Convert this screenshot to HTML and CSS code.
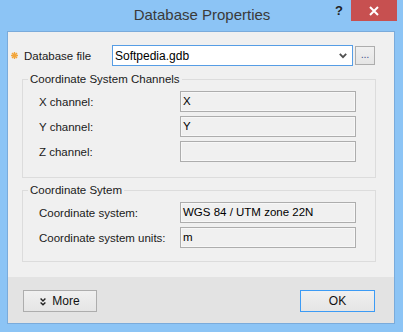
FILE: index.html
```html
<!DOCTYPE html>
<html>
<head>
<meta charset="utf-8">
<link rel="stylesheet" href="styles.css">
</head>
<body>
<div class="window">
  <div class="titlebar">
    <div class="tb-spacer"></div>
    <div class="title">Database Properties</div>
    <div class="caption-btns">
      <span class="help">?</span>
      <span class="close">
        <svg width="10" height="10" viewBox="0 0 10 10"><path d="M1 1 L9 9 M9 1 L1 9" stroke="#fff" stroke-width="2"/></svg>
      </span>
    </div>
  </div>
  <div class="client">
    <div class="content">
      <div class="file-row">
        <svg class="req" width="7" height="7" viewBox="0 0 7 7"><path d="M3.5 0 V7 M0 3.5 H7 M1 1 L6 6 M6 1 L1 6" stroke="#f2a53a" stroke-width="1.4"/></svg>
        <span class="file-label">Database file</span>
        <div class="combo">
          <span class="combo-text">Softpedia.gdb</span>
          <svg class="chev" width="8" height="6" viewBox="0 0 8 6"><path d="M0.8 0.8 L4 4.2 L7.2 0.8" fill="none" stroke="#505050" stroke-width="1.8"/></svg>
        </div>
        <div class="browse">...</div>
      </div>
      <fieldset class="group g1">
        <legend>Coordinate System Channels</legend>
        <div class="row"><span class="lbl">X channel:</span><div class="field">X</div></div>
        <div class="row"><span class="lbl">Y channel:</span><div class="field">Y</div></div>
        <div class="row"><span class="lbl">Z channel:</span><div class="field"></div></div>
      </fieldset>
      <fieldset class="group g2">
        <legend>Coordinate Sytem</legend>
        <div class="row"><span class="lbl">Coordinate system:</span><div class="field">WGS 84 / UTM zone 22N</div></div>
        <div class="row"><span class="lbl">Coordinate system units:</span><div class="field">m</div></div>
      </fieldset>
    </div>
    <div class="footer">
      <div class="btn more">
        <svg width="6" height="8" viewBox="0 0 6 8"><path d="M0.6 0.6 L3 3 L5.4 0.6 M0.6 4.4 L3 6.8 L5.4 4.4" fill="none" stroke="#222" stroke-width="1.4"/></svg>
        <span>More</span>
      </div>
      <div class="btn ok">OK</div>
    </div>
  </div>
</div>
</body>
</html>
```
FILE: styles.css
```css
* { box-sizing: border-box; }
html, body { margin: 0; padding: 0; }
body {
  width: 403px;
  height: 332px;
  overflow: hidden;
  font-family: "Liberation Sans", Arial, sans-serif;
  font-size: 11.5px;
  color: #1a1a1a;
}
.window {
  width: 403px;
  height: 332px;
  background: #8cc4f5;
  display: flex;
  flex-direction: column;
  padding: 0 8px 8px 7px;
}
.titlebar {
  height: 31px;
  flex: 0 0 31px;
  display: grid;
  grid-template-columns: 1fr auto 1fr;
  margin: 0 -8px 0 -7px;
}
.title {
  font-size: 15px;
  color: #3a3a3a;
  line-height: 30px;
  padding-left: 1px;
}
.caption-btns {
  display: flex;
  justify-content: flex-end;
  align-items: flex-start;
  padding-right: 6px;
}
.help {
  width: 26px;
  height: 21px;
  font-weight: bold;
  font-size: 13px;
  color: #222;
  text-align: center;
  line-height: 22px;
  padding-left: 2px;
}
.close {
  width: 46px;
  height: 21px;
  background: #c75050;
  display: flex;
  align-items: center;
  justify-content: center;
}
.client {
  flex: 1;
  border: 1px solid #7aabdb;
  background: #f0f0f0;
  display: flex;
  flex-direction: column;
}
.content {
  flex: 1;
  padding-top: 13px;
}
.file-row {
  display: flex;
  align-items: center;
  height: 21px;
  padding: 0 19px 0 3px;
}
.req { margin-right: 6px; margin-top: -1px; }
.file-label { flex: 1; color: #1a1a1a; }
.combo {
  width: 241px;
  height: 21px;
  background: #fff;
  border: 1px solid #569de5;
  display: flex;
  align-items: center;
  padding: 0 5px 0 2px;
}
.combo-text { flex: 1; font-size: 12px; color: #000; }
.chev { margin-top: 1px; }
.browse {
  width: 20px;
  height: 19px;
  margin-left: 2px;
  border: 1px solid #adadad;
  background: linear-gradient(#f0f0f0, #e5e5e5);
  text-align: center;
  font-size: 11px;
  line-height: 15px;
  color: #4a5a90;
  letter-spacing: -0.3px;
}
.group {
  margin: 0 18px 0 14px;
  border: 1px solid #dcdcdc;
  padding: 4px 19px 0 16px;
  min-width: 0;
}
.g1 { margin-top: 6px; padding-bottom: 15px; }
.g2 { margin-top: 5px; padding-bottom: 13px; }
legend {
  margin-left: -11px;
  padding: 0 2px;
  line-height: 15px;
  color: #1a1a1a;
}
.row {
  display: grid;
  grid-template-columns: 1fr 176px;
  align-items: center;
  height: 21px;
}
.row + .row { margin-top: 4px; }
.field {
  height: 21px;
  border: 1px solid #adadad;
  box-shadow: inset 0 0 0 1px #f7f7f7;
  background: #f0f0f0;
  padding-left: 2px;
  line-height: 19px;
  color: #000;
}
.footer {
  height: 46px;
  flex: 0 0 46px;
  background: #e3e3e3;
  display: flex;
  justify-content: space-between;
  padding: 13px 19px 0 15px;
}
.btn {
  height: 22px;
  border: 1px solid #adadad;
  background: linear-gradient(#f0f0f0, #e5e5e5);
  display: flex;
  align-items: center;
  justify-content: center;
  font-size: 12px;
  color: #111;
}
.more { width: 74px; gap: 6px; }
.more svg { margin-top: 1px; }
.ok { width: 75px; border-color: #3c9bf5; }
```
